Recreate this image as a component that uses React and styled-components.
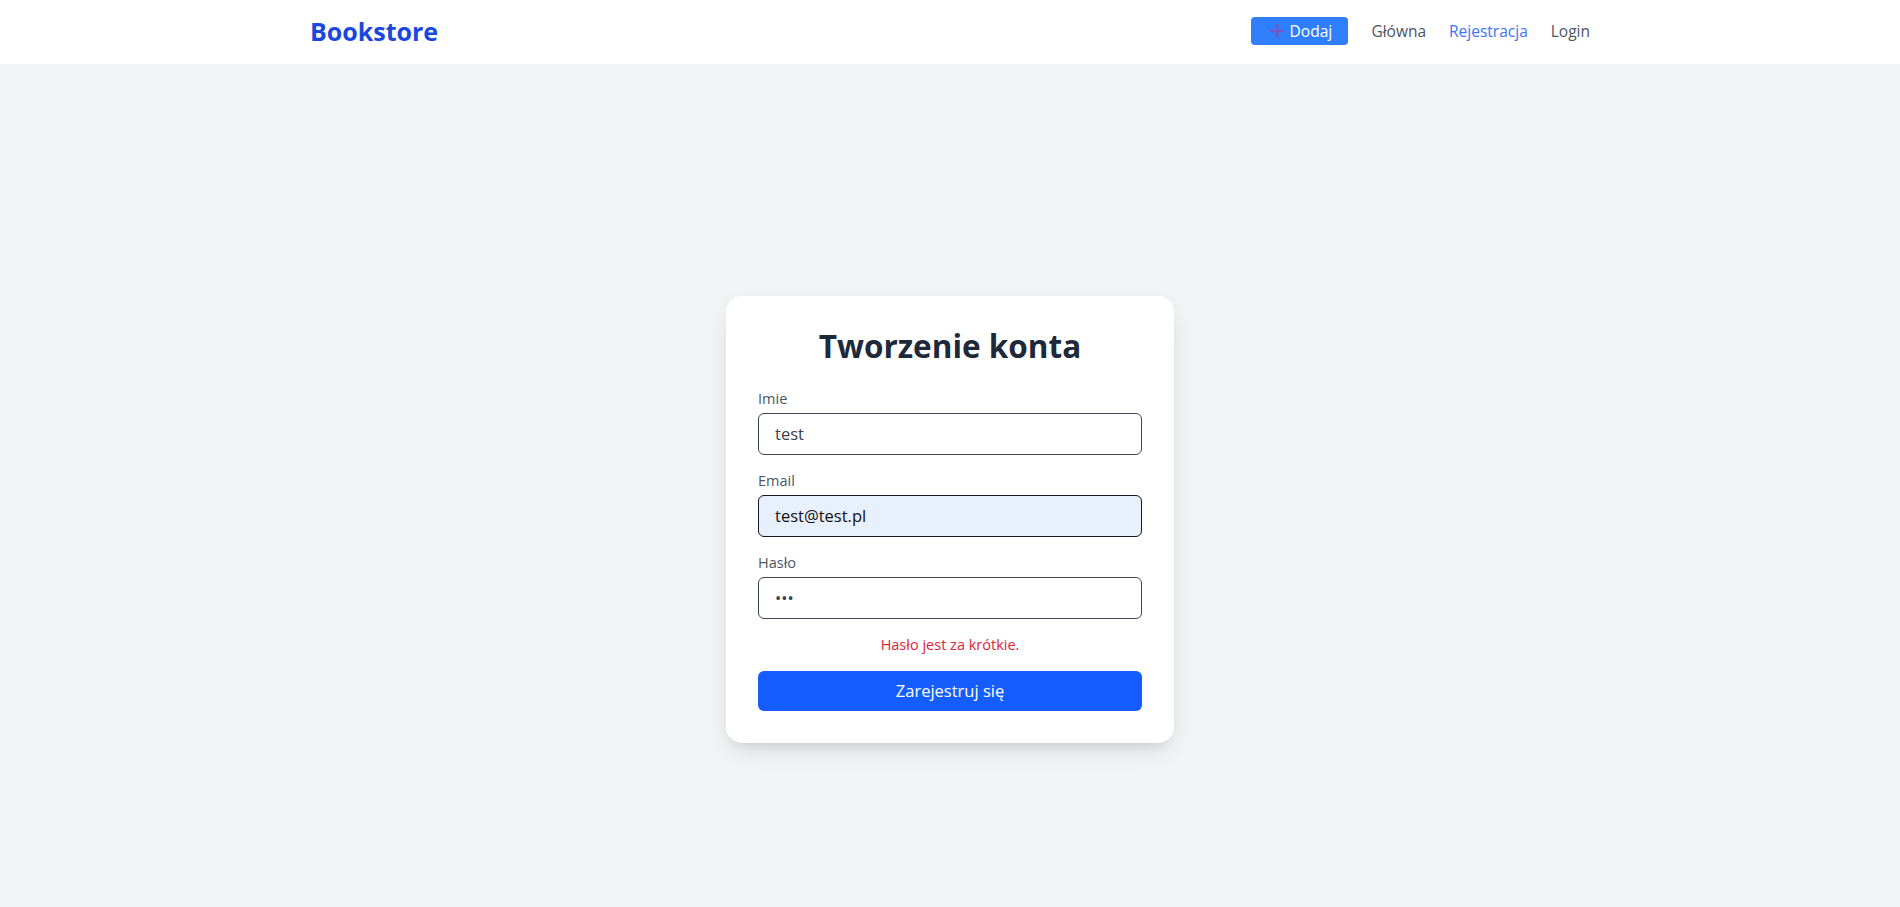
import React from 'react';
import styled, { createGlobalStyle } from 'styled-components';

const GlobalStyle = createGlobalStyle`
  html, body {
    margin: 0;
    padding: 0;
    background: #f2f3f5;
    font-family: "Open Sans", "Noto Sans", sans-serif;
    color: #1f2937;
  }
  * {
    box-sizing: border-box;
  }
`;

const Header = styled.header`
  background: #fff;
  height: 64px;
`;

const HeaderInner = styled.div`
  max-width: 1280px;
  height: 100%;
  margin: 0 auto;
  display: flex;
  align-items: center;
  justify-content: space-between;
`;

const Brand = styled.a`
  color: #1a47e0;
  font-size: 25px;
  font-weight: 700;
  text-decoration: none;
  margin-top: -2px;
`;

const Nav = styled.nav`
  display: flex;
  align-items: center;
  gap: 23px;
  margin-top: -2px;
`;

const AddButton = styled.button`
  display: flex;
  align-items: center;
  justify-content: center;
  gap: 6px;
  width: 97px;
  height: 28px;
  padding: 0 0 0 2px;
  border: 0;
  border-radius: 4px;
  background: #2f7ffd;
  color: #fff;
  font-family: inherit;
  font-size: 15.5px;
  cursor: pointer;
`;

const NavLink = styled.a`
  color: ${(p) => (p.active ? '#3b74f6' : '#4b5563')};
  font-size: 15.5px;
  text-decoration: none;
`;

const Main = styled.main`
  min-height: calc(100vh - 64px);
  display: flex;
  align-items: center;
  justify-content: center;
  padding-top: 67px;
`;

const Card = styled.form`
  width: 448px;
  background: #fff;
  border-radius: 16px;
  padding: 32px;
  box-shadow: 0 10px 25px -5px rgba(0, 0, 0, 0.12), 0 8px 10px -6px rgba(0, 0, 0, 0.08);
`;

const Title = styled.h1`
  margin: 0 0 25px;
  text-align: center;
  font-size: 31.5px;
  line-height: 36px;
  font-weight: 700;
  color: #1e293b;
`;

const Field = styled.div`
  display: flex;
  flex-direction: column;
  gap: 4px;
  margin-bottom: 16px;
`;

const Label = styled.label`
  font-size: 14.5px;
  line-height: 20px;
  color: #4b5563;
`;

const Input = styled.input`
  height: 42px;
  padding: 0 16px;
  border: 1px solid ${(p) => (p.focused ? '#111827' : '#3b4656')};
  border-radius: 6px;
  background: ${(p) => (p.autofilled ? '#e8f0fe' : '#fff')};
  color: ${(p) => (p.autofilled ? '#111' : '#374151')};
  font-family: inherit;
  font-size: 16.5px;
  outline: none;
`;

const ErrorText = styled.p`
  margin: 0 0 16px;
  text-align: center;
  font-size: 14.5px;
  line-height: 20px;
  color: #e0243a;
`;

const SubmitButton = styled.button`
  width: 100%;
  height: 40px;
  border: 0;
  border-radius: 6px;
  background: #165dff;
  color: #fff;
  font-family: inherit;
  font-size: 16.5px;
  cursor: pointer;
`;

const PlusIcon = () => (
  <svg width="14" height="14" viewBox="0 0 14 14">
    <path d="M7 1v12M1 7h12" stroke="#7257c6" strokeWidth="2.6" strokeLinecap="round" />
  </svg>
);

export default function App() {
  return (
    <>
      <GlobalStyle />
      <Header>
        <HeaderInner>
          <Brand href="#">Bookstore</Brand>
          <Nav>
            <AddButton type="button">
              <PlusIcon />
              Dodaj
            </AddButton>
            <NavLink href="#">Główna</NavLink>
            <NavLink href="#" active>
              Rejestracja
            </NavLink>
            <NavLink href="#">Login</NavLink>
          </Nav>
        </HeaderInner>
      </Header>
      <Main>
        <Card onSubmit={(e) => e.preventDefault()}>
          <Title>Tworzenie konta</Title>
          <Field>
            <Label>Imie</Label>
            <Input type="text" defaultValue="test" />
          </Field>
          <Field>
            <Label>Email</Label>
            <Input type="email" defaultValue="test@test.pl" autofilled focused />
          </Field>
          <Field>
            <Label>Hasło</Label>
            <Input type="password" defaultValue="abc" />
          </Field>
          <ErrorText>Hasło jest za krótkie.</ErrorText>
          <SubmitButton type="submit">Zarejestruj się</SubmitButton>
        </Card>
      </Main>
    </>
  );
}
